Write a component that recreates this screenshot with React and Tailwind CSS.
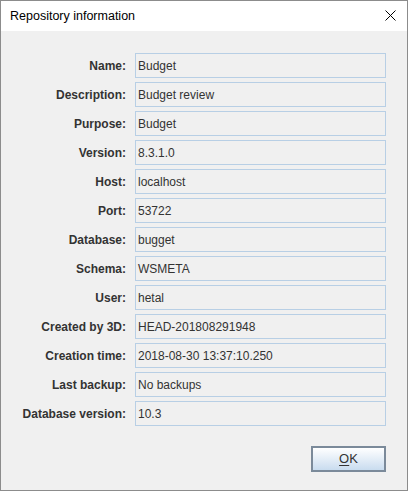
const rows = [
  ['Name:', 'Budget'],
  ['Description:', 'Budget review'],
  ['Purpose:', 'Budget'],
  ['Version:', '8.3.1.0'],
  ['Host:', 'localhost'],
  ['Port:', '53722'],
  ['Database:', 'bugget'],
  ['Schema:', 'WSMETA'],
  ['User:', 'hetal'],
  ['Created by 3D:', 'HEAD-201808291948'],
  ['Creation time:', '2018-08-30 13:37:10.250'],
  ['Last backup:', 'No backups'],
  ['Database version:', '10.3'],
];

export default function App() {
  return (
    <div className="w-[408px] h-[491px] border border-[#8c8c8c] bg-[#f0f0f0] flex flex-col" style={{ fontFamily: '"Liberation Sans", Arial, sans-serif' }}>
      {/* title bar */}
      <div className="h-[30px] bg-white flex items-center justify-between pl-[9px] pr-[11px]">
        <span className="text-[12.5px] text-black">Repository information</span>
        <svg width="11" height="11" viewBox="0 0 11 11" className="mb-[1px]">
          <path d="M0.5 0.5 L10.5 10.5 M10.5 0.5 L0.5 10.5" stroke="#000" strokeWidth="1" />
        </svg>
      </div>

      {/* fields */}
      <div className="flex flex-col gap-[4px] pt-[22px] pr-[21px]">
        {rows.map(([label, value]) => (
          <div key={label} className="flex items-center">
            <div className="w-[125px] text-right text-[12px] font-bold text-[#333333] shrink-0">{label}</div>
            <div className="ml-[9px] flex-1 h-[25px] border border-[#b8cfe5] flex items-center px-[2px] text-[12px] text-[#333333]">
              {value}
            </div>
          </div>
        ))}
      </div>

      {/* buttons */}
      <div className="flex justify-end pr-[21px] pt-[20px]">
        <button className="w-[75px] h-[26px] border-2 border-[#7b8a9a] bg-gradient-to-b from-white to-[#c9dcef] text-[13px] text-[#333333] flex items-center justify-center">
          <span><span className="underline underline-offset-2">O</span>K</span>
        </button>
      </div>
    </div>
  );
}
